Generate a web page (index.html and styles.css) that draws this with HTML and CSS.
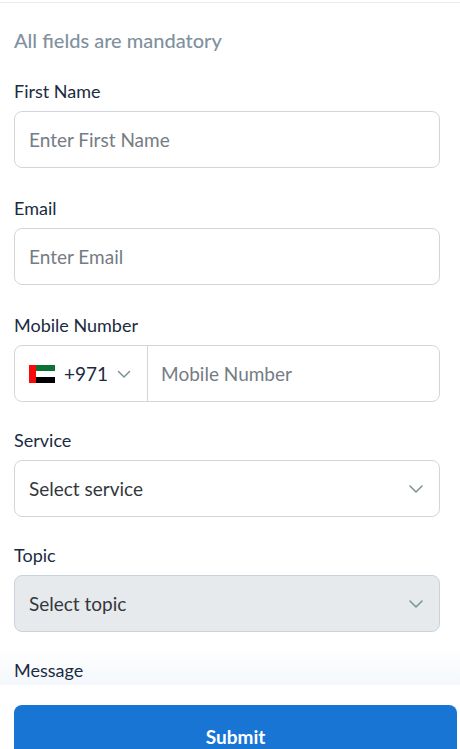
FILE: index.html
```html
<!DOCTYPE html>
<html lang="en">
<head>
<meta charset="utf-8">
<meta name="viewport" content="width=device-width, initial-scale=1">
<title>Contact form</title>
<link rel="stylesheet" href="styles.css">
</head>
<body>
<form class="page">
  <div class="topbar"></div>
  <main class="fields">
    <p class="note">All fields are mandatory</p>
    <div class="field">
      <label for="first-name">First Name</label>
      <input class="control" id="first-name" type="text" placeholder="Enter First Name">
    </div>
    <div class="field">
      <label for="email">Email</label>
      <input class="control" id="email" type="email" placeholder="Enter Email">
    </div>
    <div class="field compact">
      <label for="mobile">Mobile Number</label>
      <div class="control phone">
        <button class="country" type="button" aria-label="Country code +971">
          <svg class="flag" viewBox="0 0 26 18" aria-hidden="true"><path fill="#fff" d="M0 0h26v18H0z"/><path fill="#0a7234" d="M6 0h20v6H6z"/><path fill="#000" d="M6 12h20v6H6z"/><path fill="#f60a0c" d="M0 0h7v18H0z"/></svg>
          <span>+971</span>
          <svg class="chevron" viewBox="0 0 14 8" aria-hidden="true"><path d="M1.5 1.5L7 7l5.500-5.500"/></svg>
        </button>
        <input class="number" id="mobile" type="tel" placeholder="Mobile Number">
      </div>
    </div>
    <div class="field compact">
      <label for="service">Service</label>
      <div class="select">
        <select class="control" id="service"><option>Select service</option></select>
        <svg class="chevron" viewBox="0 0 14 8" aria-hidden="true"><path d="M1 1l6 6 6-6"/></svg>
      </div>
    </div>
    <div class="field compact">
      <label for="topic">Topic</label>
      <div class="select">
        <select class="control" id="topic" disabled><option>Select topic</option></select>
        <svg class="chevron" viewBox="0 0 14 8" aria-hidden="true"><path d="M1 1l6 6 6-6"/></svg>
      </div>
    </div>
    <div class="field">
      <label for="message">Message</label>
      <textarea class="control" id="message"></textarea>
    </div>
  </main>
  <footer class="actions">
    <button class="submit" type="submit">Submit</button>
  </footer>
</form>
</body>
</html>
```
FILE: styles.css
```css
* {
  box-sizing: border-box;
}

body {
  margin: 0;
  background: #fff;
  color: #1b2b3f;
  font-family: Lato, "Open Sans", sans-serif;
  font-size: 18px;
  line-height: 24px;
}

button,
input,
select,
textarea {
  font: inherit;
  color: inherit;
}

.page {
  display: flex;
  flex-direction: column;
  height: 100vh;
}

.topbar {
  flex: none;
  height: 3px;
  border-bottom: 1px solid #e8eaeb;
}

.fields {
  flex: 1;
  min-height: 0;
  overflow-y: auto;
  scrollbar-width: none;
  padding: 25px 20px 24px 14px;
  background: linear-gradient(to top, #f4f8fc, #fff 40px);
}

.note {
  margin: 0 0 27px;
  color: #81919f;
  font-size: 20px;
  font-weight: 500;
}

.field {
  display: flex;
  flex-direction: column;
  gap: 8px;
  margin-bottom: 28px;
}

.compact {
  margin-bottom: 26px;
}

.control {
  width: 100%;
  height: 57px;
  padding: 0 14px;
  border: 1px solid #d2d6dc;
  border-radius: 8px;
  background: #fff;
  font-size: 19px;
  outline-offset: -1px;
}

::placeholder {
  color: #757c83;
  opacity: 1;
}

textarea.control {
  height: 120px;
  padding: 14px;
}

.phone {
  display: flex;
  padding: 0;
}

.country {
  display: flex;
  align-items: center;
  gap: 9px;
  padding: 0 16px 0 14px;
  border: 0;
  border-right: 1px solid #d2d6dc;
  background: none;
}

.flag {
  width: 26px;
  height: 18px;
}

.number {
  flex: 1;
  min-width: 0;
  padding: 0 13px;
  border: 0;
  border-radius: 0 8px 8px 0;
  background: none;
}

.chevron {
  width: 14px;
  height: 8px;
  fill: none;
  stroke: #7b9193;
  stroke-width: 1.5;
  stroke-linecap: round;
  stroke-linejoin: round;
}

.select {
  display: grid;
  align-items: center;
}

.select > * {
  grid-area: 1 / 1;
}

.select .control {
  appearance: none;
  color: #34373c;
}

.select .control:disabled {
  border-color: #cbd3da;
  background: #e7eaed;
  opacity: 1;
}

.select .chevron {
  justify-self: end;
  margin-right: 17px;
  pointer-events: none;
}

.actions {
  flex: none;
  padding: 20px 3px 0 14px;
  background: #fff;
}

.submit {
  display: block;
  width: 100%;
  height: 44px;
  padding: 20px 0 0;
  border: 0;
  border-radius: 8px 8px 0 0;
  background: #1975d4;
  color: #fff;
  font-size: 19px;
  font-weight: 700;
}
```
